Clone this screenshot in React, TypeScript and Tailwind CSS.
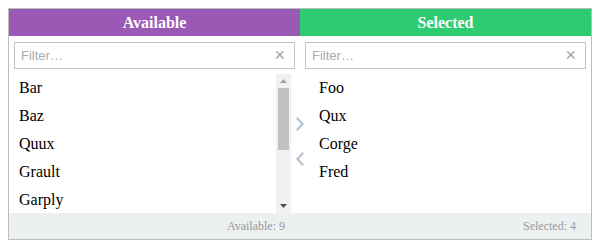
import React, { useState } from 'react';

const AVAILABLE = ['Bar', 'Baz', 'Quux', 'Grault', 'Garply', 'Waldo', 'Plugh', 'Xyzzy', 'Thud'];
const SELECTED = ['Foo', 'Qux', 'Corge', 'Fred'];

const FilterBox: React.FC<{ value: string; onChange: (v: string) => void }> = ({ value, onChange }) => (
  <div className="relative h-[27px] border border-[#c4c4c4] bg-white">
    <input
      value={value}
      onChange={(e) => onChange(e.target.value)}
      placeholder="Filter…"
      className="h-full w-full pl-[6px] pr-6 text-[13px] text-[#333] outline-none placeholder:text-[#aaa] font-['Liberation_Sans',Arial,sans-serif]"
    />
    <span className="absolute right-[9px] top-[3px] text-[18px] leading-[18px] text-[#a0a0a0] font-['Liberation_Sans',Arial,sans-serif]">
      ×
    </span>
  </div>
);

const Chevron: React.FC<{ dir: 'left' | 'right' }> = ({ dir }) => (
  <svg width="8" height="14" viewBox="0 0 8 14" fill="none">
    <polyline
      points={dir === 'right' ? '1.5,1.5 6.5,7 1.5,12.5' : '6.5,1.5 1.5,7 6.5,12.5'}
      stroke="#b8c4cf"
      strokeWidth="2.4"
      strokeLinecap="round"
      strokeLinejoin="round"
    />
  </svg>
);

// classic scrollbar look, drawn by hand so it doesn't depend on overlay scrollbars
const FakeScrollbar = () => (
  <div className="flex h-full w-[15px] flex-col items-center bg-[#f1f1f1]">
    <div className="flex h-[14px] w-full items-center justify-center">
      <svg width="7" height="4" viewBox="0 0 7 4">
        <polygon points="0,4 3.5,0 7,4" fill="#a3a3a3" />
      </svg>
    </div>
    <div className="h-[62px] w-[11px] bg-[#c1c1c1]" />
    <div className="flex-1" />
    <div className="flex h-[14px] w-full items-center justify-center">
      <svg width="7" height="4" viewBox="0 0 7 4">
        <polygon points="0,0 7,0 3.5,4" fill="#505050" />
      </svg>
    </div>
  </div>
);

const ItemList: React.FC<{ items: string[]; scroll?: boolean }> = ({ items, scroll }) => (
  <div className="flex h-[139px] w-[282px]">
    <ul className="flex-1 overflow-hidden">
      {items.map((item) => (
        <li key={item} className="flex h-[28px] items-center pl-[10px] text-[16px] text-black">
          {item}
        </li>
      ))}
    </ul>
    {scroll && <FakeScrollbar />}
  </div>
);

export default function App() {
  const [leftFilter, setLeftFilter] = useState('');
  const [rightFilter, setRightFilter] = useState('');

  const available = AVAILABLE.filter((i) => i.toLowerCase().includes(leftFilter.toLowerCase()));
  const selected = SELECTED.filter((i) => i.toLowerCase().includes(rightFilter.toLowerCase()));

  return (
    <div className="p-[8px] font-['Liberation_Serif','Times_New_Roman',serif]">
      <div className="w-[584px] border border-[#bdbdbd] bg-white">
        <div className="grid grid-cols-2 h-[27px] text-[16px] font-bold text-white">
          <div className="flex items-center justify-center bg-[#9b59b6]">Available</div>
          <div className="flex items-center justify-center bg-[#2ecc71]">Selected</div>
        </div>

        <div className="grid grid-cols-2 px-[5px] pt-[6px] pb-[5px] gap-[10px]">
          <FilterBox value={leftFilter} onChange={setLeftFilter} />
          <FilterBox value={rightFilter} onChange={setRightFilter} />
        </div>

        <div className="flex">
          <ItemList items={available} scroll={available.length > 5} />
          <div className="flex w-[18px] flex-col items-center justify-center gap-[21px] pb-[4px]">
            <Chevron dir="right" />
            <Chevron dir="left" />
          </div>
          <ItemList items={selected} />
        </div>

        <div className="grid grid-cols-2 h-[26px] bg-[#ecf0f1] text-[12px] text-[#999]">
          <div className="flex items-center justify-end pr-[15px]">Available: {available.length}</div>
          <div className="flex items-center justify-end pr-[15px]">Selected: {selected.length}</div>
        </div>
      </div>
    </div>
  );
}
